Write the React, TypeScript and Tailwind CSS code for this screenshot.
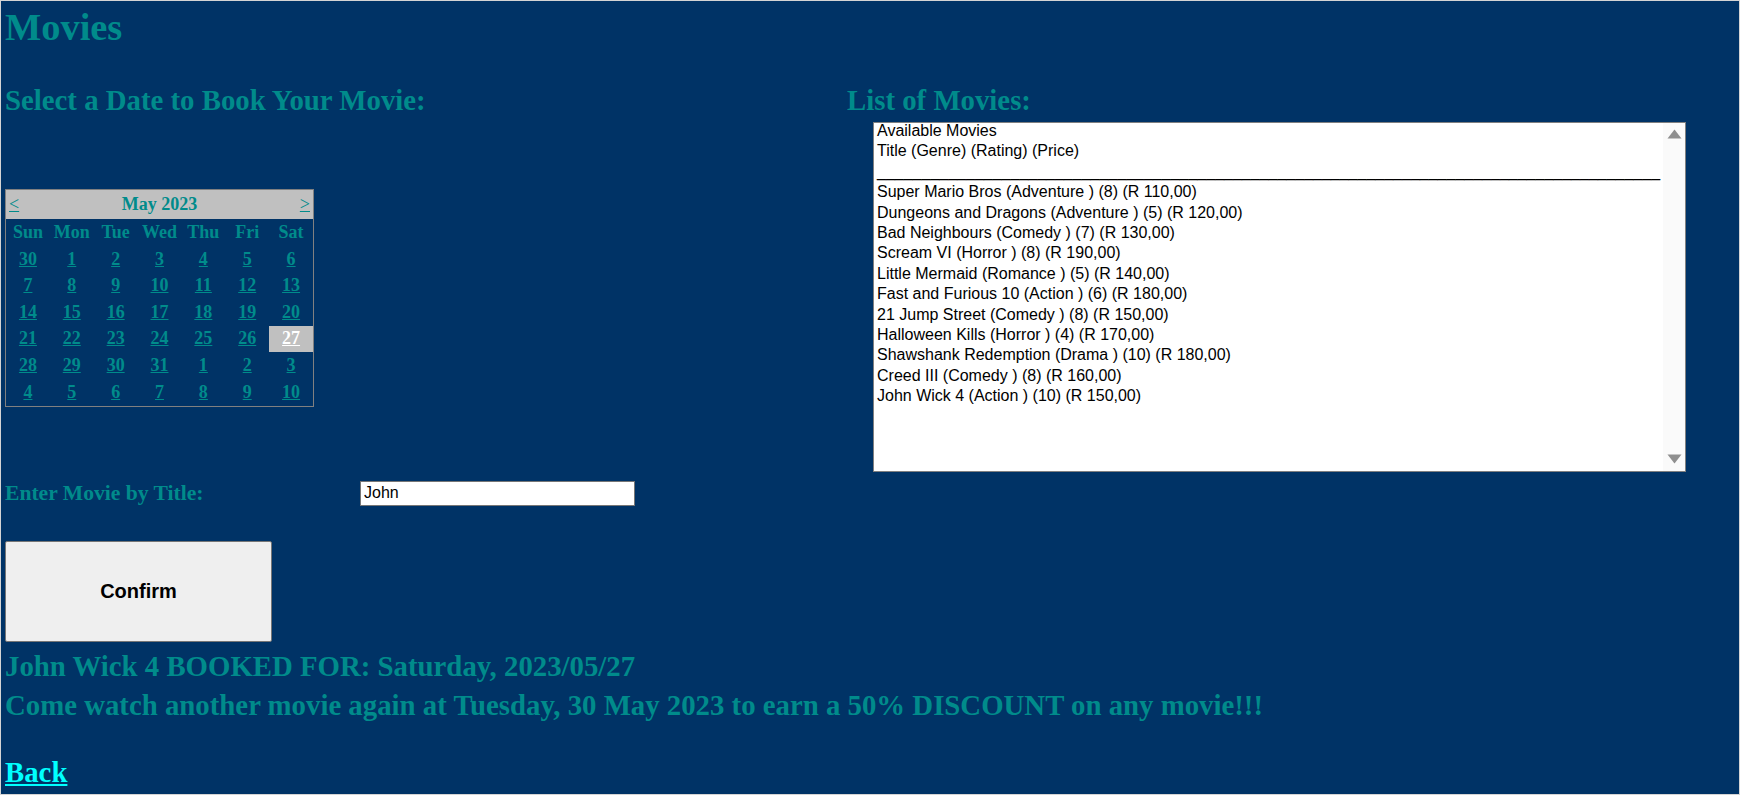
import React from "react";

const MOVIES = [
  "Super Mario Bros (Adventure ) (8) (R 110,00)",
  "Dungeons and Dragons (Adventure ) (5) (R 120,00)",
  "Bad Neighbours (Comedy ) (7) (R 130,00)",
  "Scream VI (Horror ) (8) (R 190,00)",
  "Little Mermaid (Romance ) (5) (R 140,00)",
  "Fast and Furious 10 (Action ) (6) (R 180,00)",
  "21 Jump Street (Comedy ) (8) (R 150,00)",
  "Halloween Kills (Horror ) (4) (R 170,00)",
  "Shawshank Redemption (Drama ) (10) (R 180,00)",
  "Creed III (Comedy ) (8) (R 160,00)",
  "John Wick 4 (Action ) (10) (R 150,00)"
];

const DAY_NAMES = ["Sun", "Mon", "Tue", "Wed", "Thu", "Fri", "Sat"];

const WEEKS = [
  ["30", "1", "2", "3", "4", "5", "6"],
  ["7", "8", "9", "10", "11", "12", "13"],
  ["14", "15", "16", "17", "18", "19", "20"],
  ["21", "22", "23", "24", "25", "26", "27"],
  ["28", "29", "30", "31", "1", "2", "3"],
  ["4", "5", "6", "7", "8", "9", "10"]
];

const Calendar = () => (
  <div className="w-[309px] border border-[#808080]">
    <div className="h-[29px] bg-[#c0c0c0] flex items-center justify-between px-[3px] text-[18px] font-bold">
      <a className="underline font-normal cursor-pointer">&lt;</a>
      <span>May 2023</span>
      <a className="underline font-normal cursor-pointer">&gt;</a>
    </div>
    <div className="grid grid-cols-7 text-[18px] font-bold">
      {DAY_NAMES.map(d => (
        <div key={d} className="h-[26.7px] flex items-center justify-center">
          {d}
        </div>
      ))}
      {WEEKS.flat().map((day, i) => {
        const selected = i === 27;
        return (
          <div
            key={i}
            className={
              selected
                ? "h-[26.67px] flex items-center justify-center bg-[#c0c0c0] text-white"
                : "h-[26.67px] flex items-center justify-center"
            }
          >
            <a className="underline cursor-pointer">{day}</a>
          </div>
        );
      })}
    </div>
  </div>
);

const MovieList = () => (
  <div className="w-[813px] h-[350px] border border-[#808080] bg-white flex overflow-hidden font-['Liberation_Sans',Arial,sans-serif] text-[16px] leading-[20.4px] text-black">
    <div className="flex-1 overflow-hidden pl-[3px] -mt-[2px]">
      <p>Available Movies</p>
      <p>Title (Genre) (Rating) (Price)</p>
      <p className="whitespace-nowrap">{"_".repeat(88)}</p>
      {MOVIES.map(movie => (
        <p key={movie} className="whitespace-nowrap">
          {movie}
        </p>
      ))}
    </div>
    <div className="w-[22px] bg-[#fafafa] flex flex-col justify-between items-center pt-[6px] pb-[7px]">
      <svg width="15" height="10" viewBox="0 0 15 10">
        <path d="M7.5 0.5 L14.5 9.5 L0.5 9.5 Z" fill="#8f8f8f" />
      </svg>
      <svg width="15" height="10" viewBox="0 0 15 10">
        <path d="M0.5 0.5 L14.5 0.5 L7.5 9.5 Z" fill="#8f8f8f" />
      </svg>
    </div>
  </div>
);

export default function App() {
  return (
    <div className="h-screen w-full overflow-hidden bg-[#003366] border border-[#d4d4d4] px-[4px] pt-[4px] text-[#008b8b] font-['Liberation_Serif','Times_New_Roman',serif]">
      <h1 className="text-[38.4px] leading-[44px] font-bold">Movies</h1>
      <div className="flex mt-[35px]">
        <div className="w-[842px] flex flex-col items-start">
          <h2 className="text-[28.8px] leading-[33px] font-bold">
            Select a Date to Book Your Movie:
          </h2>
          <div className="mt-[72px]">
            <Calendar />
          </div>
          <div className="mt-[74px] flex items-center h-[25px]">
            <label className="w-[355px] text-[21.6px] leading-[25px] font-bold">
              Enter Movie by Title:
            </label>
            <input
              defaultValue="John"
              className="w-[275px] h-[25px] border border-[#767676] bg-white px-[3px] text-[16px] text-black font-['Liberation_Sans',Arial,sans-serif] outline-none"
            />
          </div>
          <button className="mt-[35px] w-[267px] h-[101px] bg-[#efefef] border border-[#767676] rounded-[2px] text-[20px] font-bold text-black font-['Liberation_Sans',Arial,sans-serif]">
            Confirm
          </button>
        </div>
        <div className="flex flex-col items-start">
          <h2 className="text-[28.8px] leading-[33px] font-bold">
            List of Movies:
          </h2>
          <div className="mt-[5px] ml-[26px]">
            <MovieList />
          </div>
        </div>
      </div>
      <p className="mt-[8px] text-[28.8px] leading-[33px] font-bold">
        John Wick 4 BOOKED FOR: Saturday, 2023/05/27
      </p>
      <p className="mt-[6px] text-[28.8px] leading-[33px] font-bold">
        Come watch another movie again at Tuesday, 30 May 2023 to earn a 50% DISCOUNT on any movie!!!
      </p>
      <a className="block mt-[34px] text-[28.8px] leading-[33px] font-bold underline text-[#00ffff] cursor-pointer">
        Back
      </a>
    </div>
  );
}
